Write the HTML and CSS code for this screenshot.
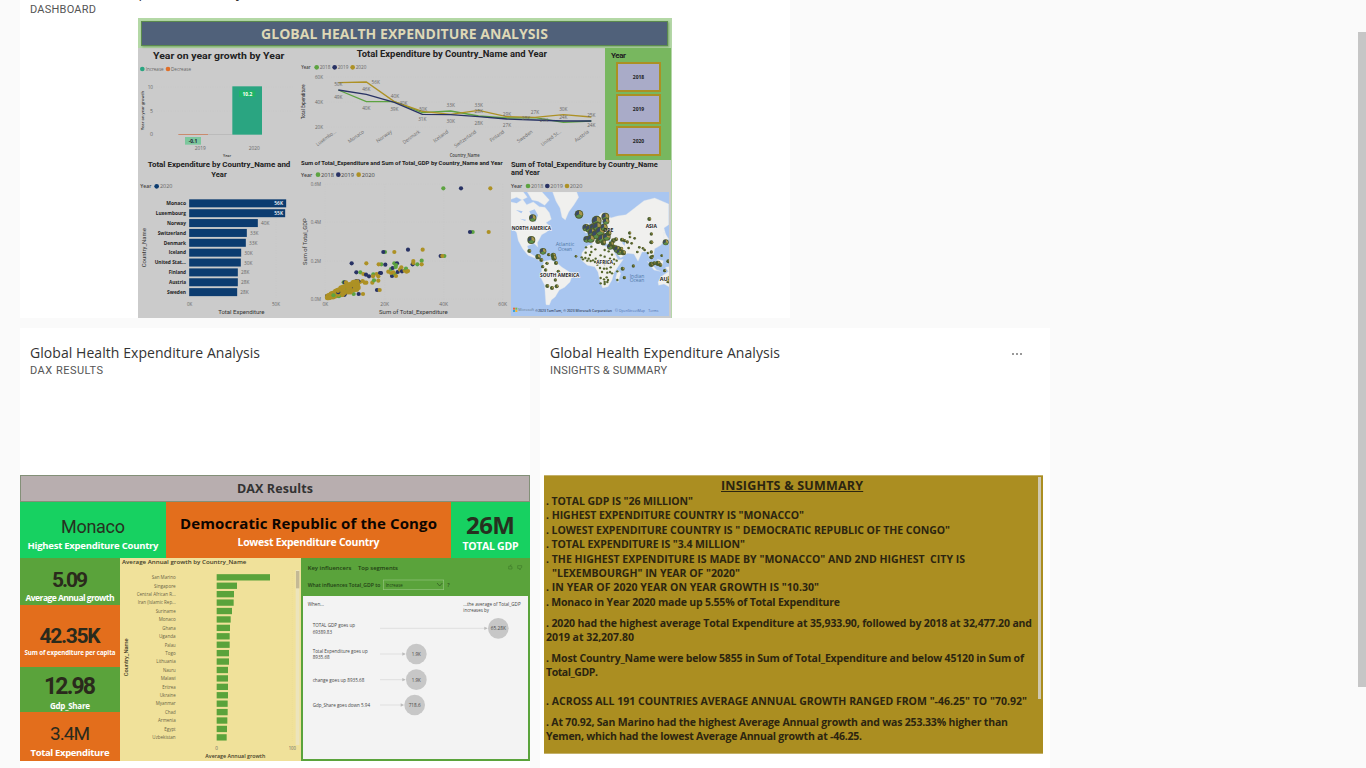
FILE: index.html
```html
<!DOCTYPE html>
<html lang="en">
<head>
<meta charset="utf-8">
<title>Global Health Expenditure Analysis</title>
<link rel="stylesheet" href="styles.css">
</head>
<body>
<main class="canvas">
  <section class="tile tile-dashboard">
    <header class="tile-head">
      <h2 class="tile-title"><span data-width="230">Global Health Expenditure Analysis</span></h2>
      <p class="tile-sub"><span data-width="66">DASHBOARD</span></p>
    </header>
    <div class="report">
      <div class="banner-wrap"><div class="banner"><span data-width="287">GLOBAL HEALTH EXPENDITURE ANALYSIS</span></div></div>
      <div class="report-row row-top">
        <svg class="chart" id="growth" viewBox="414 144 486 330"></svg>
        <svg class="chart" id="lines" viewBox="30 144 915 330"></svg>
        <div class="slicer">
          <div class="slicer-title"><span data-width="15">Year</span></div>
          <div class="slicer-item">2018</div>
          <div class="slicer-item">2019</div>
          <div class="slicer-item">2020</div>
        </div>
      </div>
      <div class="report-row">
        <svg class="chart" id="bars" viewBox="24 9 477 480"></svg>
        <svg class="chart" id="scatter" viewBox="6 9 639 480"></svg>
        <svg class="chart" id="map" viewBox="15 9 486 480"></svg>
      </div>
    </div>
  </section>

  <div class="tile-row">
    <section class="tile tile-small">
      <header class="tile-head">
        <h2 class="tile-title"><span data-width="230">Global Health Expenditure Analysis</span></h2>
        <p class="tile-sub"><span data-width="73">DAX RESULTS</span></p>
      </header>
      <div class="dax">
        <div class="dax-title"><span data-width="76">DAX Results</span></div>
        <div class="dax-cards">
          <div class="card lime"><span class="value din reg" data-width="64">Monaco</span><span class="label l11" data-width="131">Highest Expenditure Country</span></div>
          <div class="card orange"><span class="value congo" data-width="257">Democratic Republic of the Congo</span><span class="label l11" data-width="142">Lowest Expenditure Country</span></div>
          <div class="card lime"><span class="value total" data-width="49">26M</span><span class="label l11" data-width="56">TOTAL GDP</span></div>
        </div>
        <div class="dax-body">
          <div class="kpis">
            <div class="card green k1"><span class="value din k" data-width="36">5.09</span><span class="label l10" data-width="89">Average Annual growth</span></div>
            <div class="card orange k2"><span class="value din k" data-width="61">42.35K</span><span class="label l7" data-width="91">Sum of expenditure per capita</span></div>
            <div class="card green k3"><span class="value din k" data-width="52">12.98</span><span class="label l9" data-width="40">Gdp_Share</span></div>
            <div class="card orange k4"><span class="value din k reg2" data-width="40">3.4M</span><span class="label l10" data-width="79">Total Expenditure</span></div>
          </div>
          <svg class="chart annual" id="annual" viewBox="315 24 543 609"></svg>
          <svg class="chart" id="influencers" viewBox="18 264 687 609"></svg>
        </div>
      </div>
    </section>

    <section class="tile tile-small">
      <header class="tile-head">
        <h2 class="tile-title"><span data-width="230">Global Health Expenditure Analysis</span>
          <svg class="more" viewBox="0 0 12 4"><path d="M1 1h2v2H1zM5 1h2v2H5zM9 1h2v2H9z"/></svg></h2>
        <p class="tile-sub"><span data-width="117">INSIGHTS &amp; SUMMARY</span></p>
      </header>
      <div class="insights">
        <div class="insights-text">
          <h3><span data-width="142">INSIGHTS &amp; SUMMARY</span></h3>
          <p><span data-width="147">. TOTAL GDP IS "26 MILLION"</span></p>
          <p><span data-width="258">. HIGHEST EXPENDITURE COUNTRY IS "MONACCO"</span></p>
          <p><span data-width="404">. LOWEST EXPENDITURE COUNTRY IS " DEMOCRATIC REPUBLIC OF THE CONGO"</span></p>
          <p><span data-width="199">. TOTAL EXPENDITURE IS "3.4 MILLION"</span></p>
          <p><span data-width="419">. THE HIGHEST EXPENDITURE IS MADE BY "MONACCO" AND 2ND HIGHEST&nbsp; CITY IS</span></p>
          <p class="indent"><span data-width="188">"LEXEMBOURGH" IN YEAR OF "2020"</span></p>
          <p><span data-width="273">. IN YEAR OF 2020 YEAR ON YEAR GROWTH IS "10.30"</span></p>
          <p><span data-width="294">. Monaco in Year 2020 made up 5.55% of Total Expenditure</span></p>
          <p class="gap"><span data-width="486">. 2020 had the highest average Total Expenditure at 35,933.90, followed by 2018 at 32,477.20 and</span></p>
          <p><span data-width="88">2019 at 32,207.80</span></p>
          <p class="gap"><span data-width="478">. Most Country_Name were below 5855 in Sum of Total_Expenditure and below 45120 in Sum of</span></p>
          <p><span data-width="52">Total_GDP.</span></p>
          <p class="gap wide"><span data-width="481">. ACROSS ALL 191 COUNTRIES AVERAGE ANNUAL GROWTH RANGED FROM "-46.25" TO "70.92"</span></p>
          <p class="gap"><span data-width="462">. At 70.92, San Marino had the highest Average Annual growth and was 253.33% higher than</span></p>
          <p><span data-width="316">Yemen, which had the lowest Average Annual growth at -46.25.</span></p>
        </div>
        <div class="insights-scroll"></div>
      </div>
    </section>
  </div>
</main>
<div class="page-scroll"></div>
<script src="charts.js"></script>
</body>
</html>
```
FILE: styles.css
```css
* { box-sizing: border-box; }
body {
  margin: 0;
  height: 768px;
  overflow: hidden;
  display: flex;
  justify-content: space-between;
  background: #fafafa;
  font-family: "Open Sans", "Noto Sans", sans-serif;
  color: #333;
}
h2, h3, p { margin: 0; font-weight: 400; }
span { white-space: nowrap; }
.canvas { padding-left: 20px; width: 1050px; }
.page-scroll { width: 8px; height: 655px; margin-top: 32px; background: #c6c6c6; }
.tile { background: #fff; }
.tile-dashboard { width: 770px; height: 318px; overflow: hidden; }
.tile-dashboard .tile-head { display: flow-root; height: 18px; padding-top: 0; }
.tile-dashboard .tile-title { margin-top: -18px; }
.tile-row { display: flex; gap: 10px; margin-top: 10px; }
.tile-small { width: 510px; height: 440px; }
.tile-head { padding: 15px 10px 0; height: 147px; }
.tile-title {
  display: flex;
  justify-content: space-between;
  align-items: center;
  height: 20px;
  font-size: 14px;
  line-height: 20px;
  color: #333;
}
.tile-sub { font: 400 11px/16px Roboto, sans-serif; color: #555; }
.more { width: 12px; height: 4px; margin: 2px 17px 0 0; fill: #999; }

.report { width: 534px; height: 300px; margin-left: 118px; background: #cbcbcb; border-right: 1px solid #b5d6a9; }
.banner-wrap { height: 30px; padding: 3px 3px 0; background: #b4d8a6; }
.banner {
  height: 25px;
  border: 1px solid #5b8a4e;
  background: #50617a;
  box-shadow: 1px 1px 2px #79a56a;
  text-align: center;
  font-weight: 700;
  font-size: 14px;
  line-height: 24px;
  color: #ded8b6;
}
.report-row { display: flex; height: 160px; }
.row-top { height: 110px; }
.chart { display: block; flex: none; overflow: hidden; }
#growth { width: 162px; height: 110px; }
#lines { width: 305px; height: 110px; }
#bars { width: 159px; height: 160px; }
#scatter { width: 213px; height: 160px; }
#map { width: 162px; height: 160px; }
.slicer { width: 66px; height: 112px; background: #78b75f; padding-left: 11px; }
.slicer-title { padding-left: 0; margin-left: -5px; height: 14px; font: 700 8px/15px Roboto, sans-serif; color: #222; }
.slicer-item {
  width: 45px;
  height: 30px;
  margin-bottom: 2px;
  border: 2px solid #ab9023;
  background: #a9abc8;
  text-align: center;
  font: 700 5px/26px "Open Sans", sans-serif;
  color: #222;
}

.dax { width: 510px; height: 286px; }
.dax-title {
  height: 27px;
  border: 1px solid #839078;
  background: #b8aeaf;
  text-align: center;
  font-weight: 700;
  font-size: 12.5px;
  line-height: 26px;
}
.dax-cards { display: grid; grid-template-columns: 146px 285px 79px; height: 56px; }
.card { display: flex; flex-direction: column; align-items: center; overflow: hidden; }
.lime { background: #17d161; }
.orange { background: #e36e1c; }
.green { background: #5aa33b; }
.value { color: #26301f; }
.label { color: #fff; font-weight: 700; }
.din { font-family: Roboto, sans-serif; font-weight: 700; }
.reg { font-weight: 400; font-size: 18px; line-height: 20px; margin-top: 15px; }
.congo { font-weight: 700; font-size: 15px; line-height: 20px; margin-top: 11px; color: #0c0500; }
.total { font-weight: 700; font-size: 24px; line-height: 24px; margin-top: 11px; }
.l11 { font-size: 9.5px; line-height: 17px; }
.congo + .l11, .total + .l11 { font-size: 10.5px; line-height: 19px; }
.dax-body { display: grid; grid-template-columns: 100px 181px 229px; height: 203px; }
.kpis { display: grid; grid-template-rows: 47px 62px 45px 49px; }
.k { font-size: 21px; line-height: 22px; color: #2a2a1c; }
.k1 .k { margin-top: 11px; }
.k2 .k { margin-top: 20px; }
.k3 .k { margin-top: 9px; font-size: 23px; }
.k4 .k { margin-top: 11px; font-weight: 400; font-size: 19px; }
.l10 { font-size: 8.5px; line-height: 14px; }
.k4 .l10 { font-size: 9.5px; line-height: 15px; }
.l9 { font-size: 8px; line-height: 15px; }
.l7 { font-size: 6.2px; line-height: 12px; }
#annual { width: 181px; height: 203px; background: #f0e19a; }
#influencers { width: 229px; height: 203px; background: #5aa33b; }

.insights {
  display: flex;
  justify-content: space-between;
  width: 499px;
  height: 279px;
  margin-left: 4px;
  padding: 0 2px;
  background: #ab8e21;
  border-top: 1px solid #c4b16a;
  border-bottom: 1px solid #c4b16a;
  color: #2c2510;
}
.insights-text { width: 492px; }
.insights h3 { height: 18px; text-align: center; font-size: 12.5px; line-height: 20px; font-weight: 700; text-decoration: underline; }
.insights p { height: 14.4px; font-weight: 700; font-size: 10.5px; line-height: 15px; }
.insights .indent { padding-left: 6px; }
.insights .gap { margin-top: 6.6px; }
.insights .gap.wide { margin-top: 13.8px; }
.insights-scroll { width: 3px; height: 222px; margin-top: 1px; background: #cfc8b0; }

svg text { font-family: "Open Sans", sans-serif; }
svg text.d { font-family: Roboto, sans-serif; }
```
FILE: charts.js
```js
document.querySelectorAll('[data-width]').forEach(function (el) {
  var extra = (+el.dataset.width - el.getBoundingClientRect().width) / (el.textContent.length - 1);
  el.style.letterSpacing = extra.toFixed(3) + 'px';
  el.style.marginRight = (-extra).toFixed(3) + 'px';
});

var G18 = '#5da341', G19 = '#283264', G20 = '#ad9125';

// x is the left edge, y the vertical centre, w the drawn width.
function t(x, y, s, size, w, o) {
  o = o || {};
  var rot = o.rot ? ' transform="rotate(' + o.rot + ' ' + x + ' ' + y + ')"' : '';
  return '<text x="' + x + '" y="' + (y + size * 0.36) + '" font-size="' + size + '" class="' + (o.c || '') +
    '" fill="' + (o.fill || '#666') + '" font-weight="' + (o.b || 400) + '" text-anchor="' + (o.a || 'start') + '"' +
    (w ? ' textLength="' + w + '" lengthAdjust="spacingAndGlyphs"' : '') + rot + '>' + s + '</text>';
}
function rect(x, y, w, h, f) { return '<rect x="' + x + '" y="' + y + '" width="' + w + '" height="' + h + '" fill="' + f + '"/>'; }
function dot(x, y, r, f) { return '<circle cx="' + x + '" cy="' + y + '" r="' + r + '" fill="' + f + '"/>'; }
function grid(x1, y1, x2, y2) { return '<path d="M' + x1 + ' ' + y1 + 'L' + x2 + ' ' + y2 + '" stroke="#c2c2c2" stroke-dasharray="2 5"/>'; }
function put(id, s) { document.getElementById(id).innerHTML = s; }

// Year on year growth
put('growth',
  t(459, 167, 'Year on year growth by Year', 29, 394, { b: 700, fill: '#222', c: 'd' }) +
  dot(427, 207, 7, '#2aa581') + t(437, 208, 'Increase', 15, 54) +
  dot(504, 207, 7, '#e0702a') + t(513, 208, 'Decrease', 15, 60) +
  grid(470, 262, 880, 262) + grid(470, 333, 880, 333) +
  t(443, 262, '10', 14, 16) + t(450, 333, '5', 14, 9) + t(450, 403, '0', 14, 9) +
  rect(535, 402, 89, 2.5, '#c97f5c') + rect(624, 402, 73, 2, '#b3b3b3') +
  rect(697, 259, 89, 145, '#2aa581') + rect(717, 272, 49, 19, '#1fb568') +
  t(742, 282, '10.2', 14, 29, { a: 'middle', b: 700, fill: '#fff' }) +
  rect(555, 411, 48, 23, '#7cc79d') + t(579, 423, '-0.1', 15, 26, { a: 'middle', b: 700, fill: '#223' }) +
  t(601, 444, '2019', 14, 33, { a: 'middle' }) + t(763, 444, '2020', 14, 33, { a: 'middle' }) +
  t(681, 467, 'Year', 12, 24, { a: 'middle', b: 600, fill: '#333' }) +
  t(428, 332, 'Year on year growth', 12, 118, { a: 'middle', b: 600, fill: '#333', rot: -90 }));

// Expenditure by country and year
var X = [145, 229, 313, 397, 482, 566, 650, 735, 820, 904];
function line(ys, c) {
  return '<polyline fill="none" stroke="' + c + '" stroke-width="4" points="' + ys.map(function (y, i) { return X[i] + ',' + y; }).join(' ') + '"/>';
}
var s = t(200, 162, 'Total Expenditure by Country_Name and Year', 27, 571, { b: 700, fill: '#222', c: 'd' }) +
  t(34, 202, 'Year', 15, 28, { b: 600, fill: '#444' }) +
  dot(80, 202, 7, G18) + t(89, 202, '2018', 15, 32) + dot(134, 202, 7, G19) + t(143, 202, '2019', 15, 32) +
  dot(188, 202, 7, G20) + t(197, 202, '2020', 15, 32) +
  grid(110, 232, 930, 232) + grid(110, 307, 930, 307) + grid(110, 382, 930, 382) +
  t(75, 232, '60K', 14, 24) + t(75, 307, '40K', 14, 24) + t(75, 382, '20K', 14, 24) +
  t(41, 305, 'Total Expenditure', 13, 104, { a: 'middle', b: 600, fill: '#333', rot: -90 }) +
  line([270, 305, 305, 338, 333, 348, 354, 353, 367, 363], G18) +
  line([248, 246, 305, 334, 343, 331, 350, 352, 344, 351], G20) +
  line([270, 283, 307, 343, 344, 350, 357, 360, 363, 363], G19);
[[145, 252, '50K'], [145, 292, '49K'], [229, 268, '46K'], [257, 247, '56K'], [229, 324, '40K'], [315, 288, '40K'], [340, 309, '40K'], [313, 327, '39K'],
 [399, 327, '30K'], [397, 357, '31K'], [482, 317, '33K'], [482, 364, '30K'], [566, 316, '33K'], [566, 334, '28K'], [566, 369, '28K'], [651, 342, '29K'],
 [651, 376, '27K'], [735, 336, '27K'], [708, 354, '28K'], [762, 361, '26K'], [820, 328, '30K'], [820, 352, '24K'], [904, 346, '25K'], [904, 375, '24K']
].forEach(function (p) { s += t(p[0], p[1], p[2], 14, 25, { a: 'middle' }); });
['Luxembo...', 'Monaco', 'Norway', 'Denmark', 'Iceland', 'Switzerland', 'Finland', 'Sweden', 'United St...', 'Austria'].forEach(function (n, i) {
  s += t(X[i] - 9, 393, n, 15, [70, 55, 54, 60, 52, 78, 50, 54, 70, 50][i], { a: 'end', rot: -36 });
});
put('lines', s + t(524, 467, 'Country_Name', 13, 90, { a: 'middle', b: 600, fill: '#444' }));

// Top ten countries
s = t(267, 28, 'Total Expenditure by Country_Name and', 24, 428, { a: 'middle', b: 700, fill: '#222', c: 'd' }) +
  t(267, 56, 'Year', 24, 46, { a: 'middle', b: 700, fill: '#222', c: 'd' }) +
  t(31, 94, 'Year', 15, 33, { b: 600, fill: '#444' }) + dot(80, 94, 7, '#0c3c70') + t(90, 94, '2020', 16, 37) +
  t(42, 278, 'Country_Name', 17, 118, { a: 'middle', fill: '#333', rot: -90, b: 400, c: 'd' }) + grid(438, 125, 438, 430);
[['Monaco', 291, '56K'], ['Luxembourg', 288, '55K'], ['Norway', 206, '40K'], ['Switzerland', 173, '33K'], ['Denmark', 170, '33K'], ['Iceland', 156, '30K'],
 ['United Stat...', 155, '30K'], ['Finland', 146, '28K'], ['Austria', 146, '28K'], ['Sweden', 144, '28K']].forEach(function (r, i) {
  var y = 145 + i * 29.6;
  s += rect(177.5, y - 12, r[1], 24, '#0c3c70') +
    t(168, y, r[0], 15, [59, 91, 57, 85, 67, 52, 94, 52, 51, 57][i], { a: 'end', b: 700, fill: '#222' }) +
    (i < 2 ? t(459, y + 1, r[2], 15, 26, { a: 'end', fill: '#fff', b: 600 }) : t(177 + r[1] + 10, y + 1, r[2], 14, 25));
});
put('bars', s + t(179, 447, '0K', 14, 16, { a: 'middle' }) + t(438, 447, '50K', 14, 24, { a: 'middle' }) +
  t(334, 471, 'Total Expenditure', 18, 139, { a: 'middle', fill: '#333', c: 'd', b: 400 }));

// Expenditure against GDP
s = t(18, 24, 'Sum of Total_Expenditure and Sum of Total_GDP by Country_Name and Year', 18, 605, { b: 700, fill: '#222', c: 'd' }) +
  t(18, 59, 'Year', 17, 34, { b: 600, fill: '#444' }) +
  dot(69, 59, 7, G18) + t(78, 59, '2018', 18, 39, { fill: '#444' }) + dot(130, 59, 7, G19) + t(138, 59, '2019', 18, 39, { fill: '#444' }) +
  dot(191, 59, 7, G20) + t(200, 59, '2020', 18, 39, { fill: '#444' });
[[88, '0.6M'], [202, '0.4M'], [318, '0.2M'], [433, '0.0M']].forEach(function (p) { s += grid(90, p[0], 625, p[0]) + t(47, p[0], p[1], 14, 31); });
[[91, '0K'], [269, '20K'], [446, '40K'], [623, '60K']].forEach(function (p) { s += grid(p[0], 88, p[0], 433) + t(p[0], 447, p[1], 14, p[0] < 99 ? 17 : 26, { a: 'middle' }); });
s += t(355, 471, 'Sum of Total_Expenditure', 18, 206, { a: 'middle', b: 400, fill: '#333', c: 'd' }) +
  t(30, 260, 'Sum of Total_GDP', 18, 140, { a: 'middle', b: 400, fill: '#333', c: 'd', rot: -90 });
var pts = [[445, 100, 0], [498, 100, 1], [586, 100, 2], [533, 231, 0], [525, 231, 1], [581, 231, 2], [270, 291, 0], [265, 291, 1], [298, 291, 2], [339, 284, 1], [383, 284, 2],
  [448, 303, 0], [437, 303, 1], [442, 303, 2], [170, 325, 1], [214, 325, 2], [259, 328, 0], [251, 328, 2], [271, 329, 1], [298, 325, 0], [306, 325, 1], [303, 330, 0],
  [353, 328, 1], [355, 318, 2], [380, 317, 0], [367, 328, 0], [380, 328, 2], [355, 324, 2], [184, 352, 1], [196, 352, 0], [205, 357, 2], [213, 359, 1], [222, 364, 1],
  [235, 358, 0], [234, 364, 2], [245, 357, 2], [255, 354, 1], [258, 354, 1], [250, 364, 2], [280, 350, 2], [288, 342, 0], [293, 339, 1], [302, 336, 0], [291, 363, 1],
  [299, 357, 0], [303, 363, 2], [308, 351, 1], [315, 344, 2], [319, 337, 2], [321, 349, 1], [329, 347, 2], [333, 341, 0], [335, 350, 2], [339, 348, 2], [288, 354, 2],
  [295, 352, 2], [232, 383, 2], [237, 376, 0], [250, 377, 2], [214, 383, 2], [195, 381, 2], [203, 378, 2], [209, 383, 2], [184, 378, 1], [190, 379, 1], [183, 390, 1],
  [188, 391, 2], [175, 385, 2], [146, 382, 0], [149, 382, 1], [153, 382, 2], [246, 405, 1], [254, 405, 2], [176, 417, 0], [191, 417, 1], [204, 417, 2]];
pts.forEach(function (p) { s += dot(p[0], p[1], 6.3, [G18, G19, G20][p[2]]); });
for (var i = 0; i < 130; i++) {
  var u = Math.pow((i * 37 % 130) / 130, 1.3), j = (i * 53 % 17) / 17 - 0.5;
  s += dot(96 + u * 96, 427 - u * 38 + j * (8 + 22 * Math.min(u * 2, 1)), 6.3, i % 19 === 0 ? G19 : i % 31 === 0 ? G18 : G20);
}
put('scatter', s);

// Bubble map
var land = [
  'M3 36L20 40L38 28L50 44L70 36L88 50L105 52L118 68L124 88L108 98L124 112L110 126L95 134L88 148L82 158L84 172L72 160L52 168L58 188L70 196L88 206L102 216L94 216L74 204L54 196L38 176L25 152L20 128L3 108Z',
  'M3 6H40L52 22L36 30L20 22L3 28Z', 'M52 6H96L118 30L104 46L84 34L66 30Z', 'M128 6H200L206 22L192 44L176 66L166 90L156 82L150 54L138 34Z',
  'M196 68L214 66L222 74L208 82L196 78Z',
  'M102 214L122 210L142 220L156 232L188 252L180 276L164 292L148 300L136 320L124 330L118 345L108 344L106 318L104 286L92 262L96 234Z',
  'M246 98L262 82L276 68L294 70L302 84L322 78L348 74L374 54L402 32L434 24L476 42V104L462 114L470 144L452 166L434 176L430 198L420 208L412 186L396 186L384 214L372 192L352 190L332 204L320 190L306 166L288 160L272 166L252 164L236 152L250 136L244 118Z',
  'M222 104L236 100L242 120L228 130L218 120Z',
  'M234 166L264 160L290 170L310 180L324 210L340 208L324 230L312 248L306 270L294 290L278 294L270 274L264 246L254 230L232 226L214 210L216 188Z',
  'M324 240L332 250L324 278L317 264Z', 'M412 214L426 224L440 240L452 244L432 240Z', 'M442 208L460 212L456 228L444 226Z', 'M462 126L476 146L466 164L460 158Z',
  'M444 276L456 258L477 244V290L462 282L446 286Z', 'M466 232L477 230V246Z'
];
s = '<g transform="translate(15 105)"><svg x="3" y="6" width="474" height="373" viewBox="3 6 474 373">' + rect(3, 6, 474, 373, '#a9c6f0');
land.forEach(function (d) { s += '<path d="' + d + '" fill="#f0f0ee" stroke="#e2e7ec"/>'; });
s += '<path d="M58 64L74 58L84 76L76 96L66 82ZM296 150L316 152L308 160L298 158ZM338 144L346 150L344 168L337 160ZM18 60l20 4-4 6zM30 86l18 3-3 4zM274 98L284 84L288 100L278 116Z" fill="#a9c6f0"/>';
function bubble(x, y, r) {
  return dot(x, y, r, '#4d5a2e') +
    '<path d="M' + x + ' ' + y + 'v' + (-r * .8) + 'A' + r * .8 + ' ' + r * .8 + ' 0 0 1 ' + (x + r * .7) + ' ' + (y + r * .4) + 'Z" fill="#a8974a"/>' +
    '<path d="M' + x + ' ' + y + 'v' + (-r * .8) + 'A' + r * .8 + ' ' + r * .8 + ' 0 0 0 ' + (x - r * .7) + ' ' + (y + r * .4) + 'Z" fill="' + (r > 8 ? '#3a4a66' : '#46612f') + '"/>' +
    (r > 8 ? '<path d="M' + x + ' ' + y + 'L' + (x - r * .7) + ' ' + (y + r * .4) + 'A' + r * .8 + ' ' + r * .8 + ' 0 0 0 ' + (x + r * .7) + ' ' + (y + r * .4) + 'Z" fill="#5c8f4a"/>' : '');
}
[[68, 84, 11], [64, 150, 12], [207, 73, 13], [58, 183, 6], [84, 200, 8], [99, 184, 10], [94, 210, 6], [116, 194, 5], [130, 196, 8], [132, 204, 8], [138, 219, 6], [111, 220, 5], [98, 230, 5],
 [107, 240, 5], [145, 244, 5], [136, 270, 5], [112, 288, 6], [126, 294, 6], [140, 289, 6], [198, 199, 4],
 [260, 92, 15], [286, 80, 12], [288, 94, 10], [228, 113, 11], [238, 116, 12], [250, 112, 12], [262, 110, 14], [246, 128, 13], [258, 134, 14], [270, 124, 14], [282, 112, 11],
 [230, 148, 10], [242, 146, 12], [264, 154, 8], [276, 146, 13], [290, 140, 12], [280, 158, 8], [296, 130, 8], [310, 152, 7], [300, 170, 9], [318, 148, 6], [336, 149, 6], [304, 162, 8],
 [314, 172, 8], [322, 178, 11], [328, 186, 9], [340, 188, 8], [333, 177, 7], [418, 87, 6], [424, 132, 5], [424, 157, 6], [467, 157, 9], [359, 129, 5], [360, 141, 4], [374, 145, 4], [344, 152, 5],
 [352, 156, 5], [365, 160, 4], [356, 174, 4], [382, 186, 4], [388, 172, 4], [399, 175, 4], [404, 180, 4], [414, 189, 4], [424, 186, 5], [424, 202, 6], [428, 198, 4], [455, 197, 4],
 [424, 223, 8], [433, 220, 6], [444, 220, 8], [451, 225, 6], [464, 242, 5], [475, 214, 6], [370, 228, 5], [338, 236, 6], [343, 263, 5], [474, 266, 7], [474, 274, 6]
].forEach(function (b) { s += bubble(b[0], b[1], b[2]); });
[[227, 188], [215, 202], [219, 208], [226, 204], [232, 212], [236, 206], [242, 213], [249, 211], [255, 216], [262, 224], [257, 206], [240, 195], [228, 172], [244, 170], [256, 178], [244, 186], [272, 196],
 [284, 180], [284, 200], [296, 184], [306, 194], [300, 206], [312, 208], [320, 212], [294, 218], [284, 222], [270, 234], [282, 236], [276, 246], [292, 248], [302, 232], [306, 250], [272, 264], [282, 268],
 [290, 262], [294, 270], [272, 280], [284, 282], [292, 276], [300, 246], [290, 236], [322, 244], [322, 270], [284, 276], [266, 212], [312, 222]].forEach(function (p) { s += dot(p[0], p[1], 3.6, '#56672d'); });
function place(x, y, n, w) {
  return '<g stroke="#f4f4f4" stroke-width="4" paint-order="stroke">' + t(x, y, n, 16, w, { a: 'middle', b: 700, fill: '#222' }) + '</g>';
}
s += place(64, 114, 'NORTH AMERICA', 118) + place(149, 256, 'SOUTH AMERICA', 118) + place(284, 216, 'AFRICA', 50) + place(424, 108, 'ASIA', 34) + place(461, 266, 'AU', 24) + t(295, 121, 'OPE', 15, 30, { a: 'middle', b: 700, fill: '#222' });
[[165, 163, 'Atlantic', 56], [165, 178, 'Ocean', 42], [381, 258, 'Indian', 44], [381, 272, 'Ocean', 44]].forEach(function (p) { s += t(p[0], p[1], p[2], 14, p[3], { a: 'middle', fill: '#5079a8' }); });
s += rect(9, 353, 6, 6, '#e5683c') + rect(16, 353, 6, 6, '#80b842') + rect(9, 360, 6, 6, '#3ba3dc') + rect(16, 360, 6, 6, '#efb732') +
  t(25, 359, 'Microsoft', 13, 47, { fill: '#68788c' }) +
  t(76, 361, '©2023 TomTom, © 2023 Microsoft Corporation', 12, 230, { fill: '#34445c', b: 600 }) + t(315, 361, '© OpenStreetMap', 12, 90, { fill: '#4d6fac' }) + t(415, 361, 'Terms', 12, 30, { fill: '#4d6fac' });
s += '</svg></g>' + t(18, 28, 'Sum of Total_Expenditure by Country_Name', 22, 440, { b: 700, fill: '#222', c: 'd' }) + t(18, 53, 'and Year', 22, 86, { b: 700, fill: '#222', c: 'd' }) +
  t(18, 93, 'Year', 15, 34, { b: 600, fill: '#444' }) + dot(69, 93, 7, G18) + t(78, 93, '2018', 16, 37) + dot(127, 93, 7, G19) + t(136, 93, '2019', 16, 38) + dot(186, 93, 7, G20) + t(194, 93, '2020', 16, 38);
put('map', s);

// Average annual growth
s = t(321, 36, 'Average Annual growth by Country_Name', 17, 373, { b: 600, fill: '#3f3b28' }) +
  '<path d="M832 60V575" stroke="#ddcf8d" stroke-dasharray="2 4"/>' + rect(842, 60, 11, 525, '#ece4bc') + rect(843, 63, 10, 52, '#c4b995');
[['San Marino', 160, 72], ['Singapore', 61, 65], ['Central African R...', 52, 117], ['Iran (Islamic Rep...', 51, 114], ['Suriname', 46, 60], ['Monaco', 42, 51], ['Ghana', 40, 40], ['Uganda', 39, 50],
 ['Palau', 39, 33], ['Togo', 37, 31], ['Lithuania', 37, 58], ['Nauru', 34, 38], ['Malawi', 34, 45], ['Eritrea', 34, 40], ['Ukraine', 34, 48], ['Myanmar', 33, 60], ['Chad', 33, 32],
 ['Armenia', 32, 53], ['Egypt', 31, 34], ['Uzbekistan', 30, 70]].forEach(function (r, i) {
  var y = 82 + i * 25.27;
  s += rect(605, y - 9.5, r[1], 19, '#5aa33b') + t(482, y, r[0], 15, r[2], { a: 'end', fill: '#6a6445' });
});
put('annual', s + t(605, 595, '0', 14, 8, { a: 'middle' }) + t(832, 595, '100', 14, 22, { a: 'middle' }) +
  t(661, 619, 'Average Annual growth', 16, 180, { a: 'middle', b: 600, fill: '#3f3b28' }) +
  t(332, 322, 'Country_Name', 16, 114, { a: 'middle', b: 500, fill: '#3f3b28', rot: -90, c: 'd' }));

// Key influencers
s = t(38, 295, 'Key influencers', 17, 131, { b: 600, fill: '#1f3e14' }) + t(189, 295, 'Top segments', 17, 120, { b: 600, fill: '#1f3e14' }) +
  t(38, 346, 'What influences Total_GDP to', 16, 218, { b: 600, fill: '#1f3e14' }) +
  '<rect x="265" y="330" width="181" height="29" fill="none" stroke="#94c57e" stroke-width="2"/>' + t(272, 346, 'Increase', 14, 51, { fill: '#1f3e14' }) +
  '<path d="M426 339l8 9 8-9" fill="none" stroke="#2e5220" stroke-width="2"/>' + t(457, 346, '?', 16, 7, { fill: '#1f3e14' }) +
  '<path d="M641 289v8h10v-7h-4l1-6-4 5zM668 287h12v6l-4 2-1 5-2-5h-5z" fill="none" stroke="#3b7427" stroke-width="1.6"/>' +
  rect(24, 378, 675, 489, '#f3f3f3') +
  t(38, 403, 'When...', 15, 49, { fill: '#444' }) + t(505, 403, '...the average of Total_GDP', 15, 172, { fill: '#444' }) + t(505, 421, 'increases by', 15, 77, { fill: '#444' });
[[475, 610, '65.28K', 45, [['TOTAL GDP goes up', 127, 466], ['69389.83', 58, 487]]], [552, 364, '1.9K', 27, [['Total Expenditure goes up', 165, 544], ['8935.68', 51, 562]]],
 [629, 364, '1.9K', 27, [['change goes up 8935.68', 155, 631]]], [705, 359, '718.6', 36, [['Gdp_Share goes down 5.94', 172, 706]]]].forEach(function (r) {
  s += '<path d="M255 ' + r[0] + 'H' + (r[1] - 34) + '" stroke="#d4d4d4" stroke-width="2"/><path d="M' + (r[1] - 42) + ' ' + (r[0] - 5) + 'l10 5-10 5z" fill="#bbb"/>' +
    dot(r[1], r[0], 31, '#c7c7c7') + t(r[1], r[0] + 1, r[2], 15, r[3], { a: 'middle', fill: '#444' });
  r[4].forEach(function (l) { s += t(53, l[2], l[0], 15, l[1], { fill: '#444' }); });
});
put('influencers', s);
```
